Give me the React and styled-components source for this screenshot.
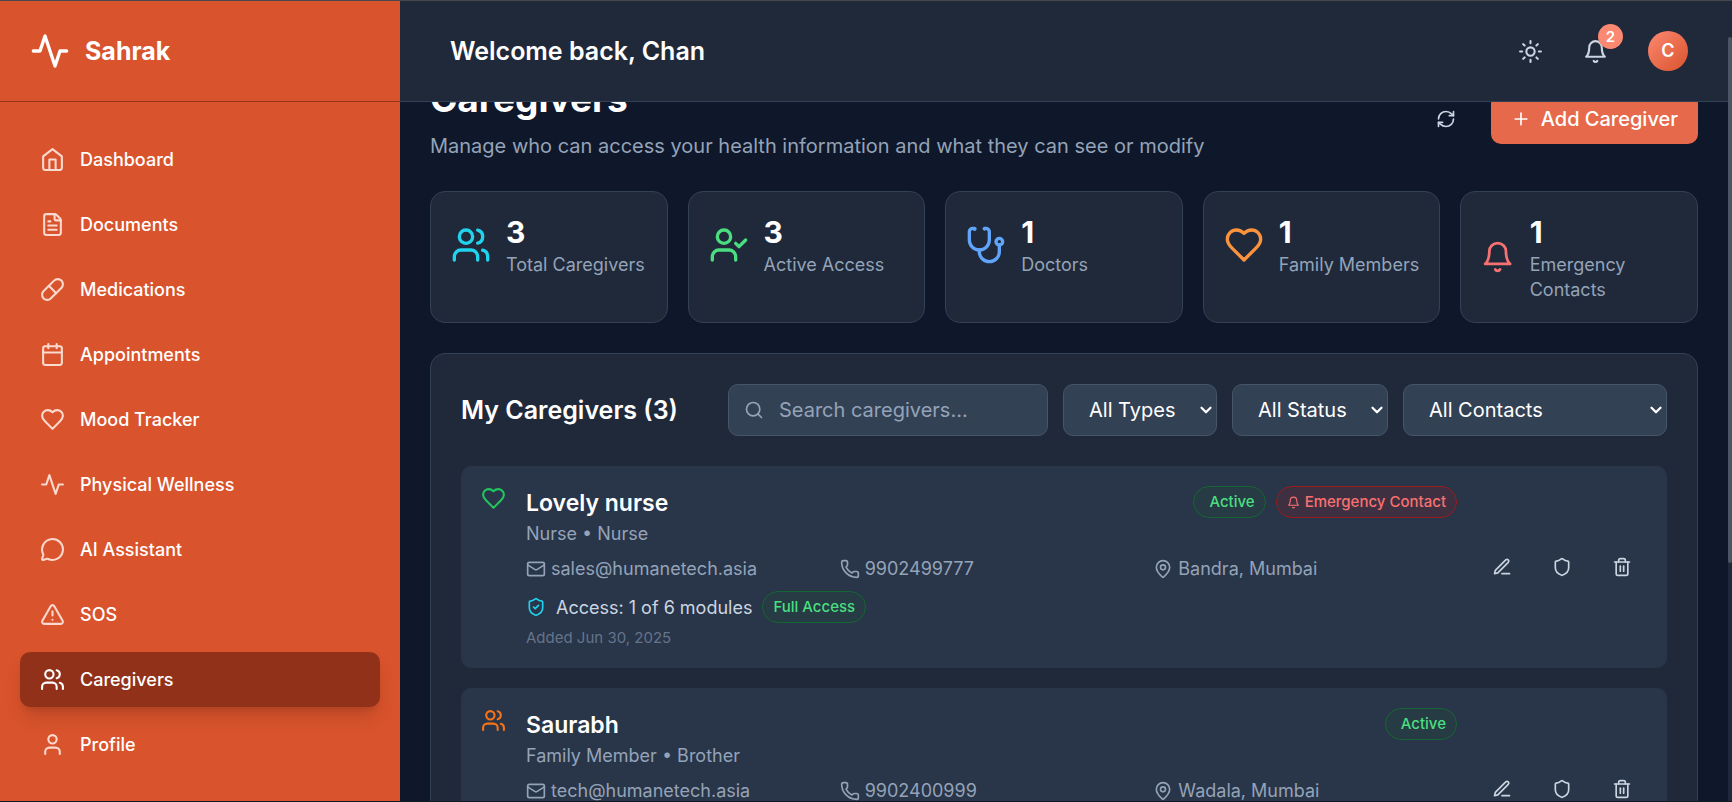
import { useLayoutEffect, useRef, useState } from "react";
import styled, { createGlobalStyle } from "styled-components";
import { Pill, Calendar, MessageCircle, TriangleAlert, User, Sun, RefreshCw, Plus, Search, Mail, Phone, MapPin, Trash2, FileText, Shield, ShieldCheck, ChevronDown } from "lucide-react";


const GlobalStyle = createGlobalStyle`
    * {
        box-sizing: border-box;
    }
    body {
        margin: 0;
        background: #0f172a;
        color: #ffffff;
        font-family: Inter, "Liberation Sans", sans-serif;
        font-size: 20px;
        line-height: 30px;
    }
    h1, h2, h3, p, ul {
        margin: 0;
        padding: 0;
    }
    button, input, select {
        font-family: inherit;
        font-size: inherit;
        line-height: inherit;
        color: inherit;
    }
    button {
        border: 0;
        background: none;
        padding: 0;
        cursor: pointer;
    }
    svg {
        display: block;
    }
`

const Shell = styled.div`
    display: flex;
    height: 100vh;
    overflow: hidden;
    border-top: 1px solid #45484a;
    border-bottom: 1px solid #0f1a26;
`

const Sidebar = styled.aside`
    width: 400px;
    flex-shrink: 0;
    background: #d9532c;
    overflow: hidden;
`

const Brand = styled.div`
    display: flex;
    align-items: center;
    gap: 15px;
    height: 101px;
    padding: 0 30px;
    border-bottom: 1px solid #96331b;
    font-size: 25px;
    font-weight: 700;
`

const NavList = styled.ul`
    display: flex;
    flex-direction: column;
    gap: 10px;
    padding: 30px 20px;
    list-style: none;
`

const NavLink = styled.a`
    display: flex;
    align-items: center;
    gap: 15px;
    padding: 15px 20px;
    border-radius: 10px;
    font-size: 18px;
    line-height: 25px;
    font-weight: 500;
    color: #ffffff;
    text-decoration: none;
    background: ${p => p.$active ? "#92311a" : "transparent"};
    box-shadow: ${p => p.$active ? "0 12px 19px -4px rgba(0, 0, 0, 0.15), 0 5px 8px -5px rgba(0, 0, 0, 0.15)" : "none"};
    svg {
        color: ${p => p.$active ? "#ffffff" : "#fbd9cf"};
    }
`

const Main = styled.div`
    display: flex;
    flex-direction: column;
    flex: 1;
    min-width: 0;
`

const TopBar = styled.header`
    display: flex;
    align-items: center;
    justify-content: space-between;
    flex-shrink: 0;
    height: 101px;
    padding: 0 40px 0 50px;
    background: #1f293a;
    border-bottom: 1px solid #334155;
`

const Welcome = styled.h2`
    font-size: 25px;
    line-height: 35px;
    font-weight: 600;
`

const TopActions = styled.div`
    display: flex;
    align-items: center;
    gap: 20px;
`

const TopButton = styled.button`
    position: relative;
    padding: 10px;
    color: #cbd5e1;
`

const Count = styled.span`
    position: absolute;
    top: -5px;
    right: -5px;
    width: 25px;
    height: 25px;
    border-radius: 50%;
    background: #fb8871;
    color: #ffffff;
    font-size: 15px;
    line-height: 25px;
    font-weight: 600;
`

const Avatar = styled.button`
    width: 40px;
    height: 40px;
    margin-left: 10px;
    border-radius: 50%;
    background: linear-gradient(135deg, #fb8871, #d9532c);
    font-size: 18px;
    font-weight: 600;
    color: #ffffff;
`

const Content = styled.main`
    flex: 1;
    min-height: 0;
    overflow-y: auto;
    scrollbar-width: none;
    padding: 30px;
`

const ScrollTrack = styled.div`
    width: 4px;
    flex-shrink: 0;
    padding-top: 36px;
    background: #1f293a;
`

const ScrollThumb = styled.div`
    height: 526px;
    border-radius: 4px;
    background: #4b5563;
`

const PageHead = styled.div`
    display: flex;
    align-items: center;
    justify-content: space-between;
    margin-bottom: 30px;
`

const PageTitle = styled.h1`
    margin-bottom: 10px;
    font-size: 37px;
    line-height: 45px;
    font-weight: 700;
`

const Muted = styled.p`
    color: #94a3b8;
`

const PageActions = styled.div`
    display: flex;
    gap: 10px;
`

const RefreshButton = styled.button`
    padding: 15px 25px;
    color: #cbd5e1;
`

const AddButton = styled.button`
    display: flex;
    align-items: center;
    gap: 10px;
    padding: 10px 20px;
    border-radius: 10px;
    background: #e6694b;
    font-weight: 500;
    color: #ffffff;
`

const Stats = styled.div`
    display: grid;
    grid-template-columns: repeat(5, 1fr);
    gap: 20px;
    margin-bottom: 30px;
`

const StatCard = styled.div`
    padding: 20px;
    border: 1px solid #334155;
    border-radius: 15px;
    background: #1f293a;
`

const StatRow = styled.div`
    display: flex;
    align-items: center;
    gap: 15px;
    color: ${p => p.$color};
`

const StatValue = styled.p`
    font-size: 30px;
    line-height: 40px;
    font-weight: 700;
    color: #ffffff;
`

const StatLabel = styled.p`
    font-size: 18px;
    line-height: 25px;
    color: #94a3b8;
`

const Panel = styled.section`
    padding: 30px;
    border: 1px solid #334155;
    border-radius: 15px;
    background: #1f293a;
`

const PanelHead = styled.div`
    display: flex;
    align-items: center;
    justify-content: space-between;
    margin-bottom: 30px;
`

const PanelTitle = styled.h2`
    font-size: 25px;
    line-height: 35px;
    font-weight: 600;
`

const Filters = styled.div`
    display: flex;
    gap: 15px;
`

const SearchBox = styled.label`
    display: flex;
    align-items: center;
    gap: 15px;
    width: 320px;
    height: 52px;
    padding: 0 15px;
    border: 1px solid #475569;
    border-radius: 10px;
    background: #334155;
    color: #94a3b8;
`

const SearchInput = styled.input`
    flex: 1;
    min-width: 0;
    border: 0;
    outline: 0;
    padding: 0;
    background: none;
    color: #ffffff;
    &::placeholder{
        color: #94a3b8;
    }
`

const SelectWrap = styled.div`
    position: relative;
    width: ${p => p.$width};
    > svg {
        position: absolute;
        top: 17px;
        right: 2px;
        pointer-events: none;
    }
`

const Select = styled.select`
    appearance: none;
    width: 100%;
    height: 52px;
    padding: 0 25px;
    border: 1px solid #475569;
    border-radius: 10px;
    background-color: #334155;
    color: #ffffff;
`

const CardList = styled.div`
    display: flex;
    flex-direction: column;
    gap: 20px;
`

const Card = styled.article`
    display: flex;
    align-items: flex-start;
    gap: 20px;
    padding: 20px;
    border-radius: 10px;
    background: #293548;
`

const TypeIcon = styled.div`
    color: ${p => p.$color};
`

const CardBody = styled.div`
    flex: 1;
    min-width: 0;
`

const CardTop = styled.div`
    display: flex;
    align-items: flex-start;
    justify-content: space-between;
    margin-bottom: 10px;
`

const Name = styled.h3`
    font-size: 23px;
    line-height: 35px;
    font-weight: 600;
`

const SmallText = styled.p`
    font-size: 18px;
    line-height: 25px;
    color: #94a3b8;
`

const Badges = styled.div`
    display: flex;
    gap: 10px;
`

const Badge = styled.span`
    display: inline-flex;
    align-items: center;
    gap: 5px;
    padding: 5px 10px;
    border: 1px solid ${p => p.$red ? "#991b1b" : "#166534"};
    border-radius: 16px;
    background: ${p => p.$red ? "#3e3040" : "#263b43"};
    color: ${p => p.$red ? "#f87171" : "#4ade80"};
    font-size: 15px;
    line-height: 20px;
    font-weight: 500;
`

const Contacts = styled.div`
    display: grid;
    grid-template-columns: repeat(3, 1fr);
    gap: 10px;
    margin-bottom: 10px;
`

const ContactItem = styled.div`
    display: flex;
    align-items: center;
    gap: 5px;
    font-size: 18px;
    line-height: 25px;
    color: #94a3b8;
`

const AccessRow = styled.div`
    display: flex;
    align-items: center;
    gap: 10px;
    margin-bottom: 5px;
    font-size: 18px;
    line-height: 25px;
    color: #cbd5e1;
    > svg {
        color: #22d3ee;
    }
`

const Added = styled.p`
    font-size: 15px;
    line-height: 20px;
    color: #64748b;
`

const CardActions = styled.div`
    display: flex;
    align-self: center;
    gap: 10px;
`

const IconButton = styled.button`
    padding: 15px;
    color: #cbd5e1;
`

// stroke icons drawn on the 24px grid
const Stroke = ({ size = 25, children }) => (
    <svg width={size} height={size} viewBox="0 0 24 24" fill="none" stroke="currentColor" strokeWidth="2" strokeLinecap="round" strokeLinejoin="round" aria-hidden="true">
        {children}
    </svg>
)

const Pulse = ({ size }) => <Stroke size={size}><path d="M22 12h-4l-3 9L9 3l-3 9H2" /></Stroke>

const Home = ({ size }) => (
    <Stroke size={size}>
        <path d="m3 9 9-7 9 7v11a2 2 0 0 1-2 2H5a2 2 0 0 1-2-2z" />
        <path d="M9 22V12h6v10" />
    </Stroke>
)

const Heart = ({ size }) => (
    <Stroke size={size}>
        <path d="M19 14c1.49-1.46 3-3.21 3-5.5A5.5 5.5 0 0 0 16.5 3c-1.76 0-3 .5-4.5 2-1.5-1.5-2.74-2-4.5-2A5.5 5.5 0 0 0 2 8.5c0 2.3 1.5 4.05 3 5.5l7 7Z" />
    </Stroke>
)

const Bell = ({ size }) => (
    <Stroke size={size}>
        <path d="M6 8a6 6 0 0 1 12 0c0 7 3 9 3 9H3s3-2 3-9" />
        <path d="M10.3 21a1.94 1.94 0 0 0 3.4 0" />
    </Stroke>
)

const Users = ({ size }) => (
    <Stroke size={size}>
        <path d="M16 21v-2a4 4 0 0 0-4-4H6a4 4 0 0 0-4 4v2" />
        <circle cx="9" cy="7" r="4" />
        <path d="M22 21v-2a4 4 0 0 0-3-3.87" />
        <path d="M16 3.13a4 4 0 0 1 0 7.75" />
    </Stroke>
)

const UserCheck = ({ size }) => (
    <Stroke size={size}>
        <path d="M16 21v-2a4 4 0 0 0-4-4H6a4 4 0 0 0-4 4v2" />
        <circle cx="9" cy="7" r="4" />
        <path d="m16 11 2 2 4-4" />
    </Stroke>
)

const Stethoscope = ({ size }) => (
    <Stroke size={size}>
        <path d="M4.8 2.3A.3.3 0 1 0 5 2H4a2 2 0 0 0-2 2v5a6 6 0 0 0 12 0V4a2 2 0 0 0-2-2h-1a.2.2 0 1 0 .3.3" />
        <path d="M8 15v1a6 6 0 0 0 12 0v-4" />
        <circle cx="20" cy="10" r="2" />
    </Stroke>
)

const Edit = ({ size }) => (
    <Stroke size={size}>
        <path d="M12 20h9" />
        <path d="M16.5 3.5a2.12 2.12 0 0 1 3 3L7 19l-4 1 1-4Z" />
    </Stroke>
)

const navItems = [
    { label: "Dashboard", icon: Home },
    { label: "Documents", icon: FileText },
    { label: "Medications", icon: Pill },
    { label: "Appointments", icon: Calendar },
    { label: "Mood Tracker", icon: Heart },
    { label: "Physical Wellness", icon: Pulse },
    { label: "AI Assistant", icon: MessageCircle },
    { label: "SOS", icon: TriangleAlert },
    { label: "Caregivers", icon: Users },
    { label: "Profile", icon: User },
]

const stats = [
    { label: "Total Caregivers", value: 3, color: "#22d3ee", icon: Users },
    { label: "Active Access", value: 3, color: "#4ade80", icon: UserCheck },
    { label: "Doctors", value: 1, color: "#60a5fa", icon: Stethoscope },
    { label: "Family Members", value: 1, color: "#fb923c", icon: Heart },
    { label: "Emergency Contacts", value: 1, color: "#f87171", icon: Bell },
]

const filters = [
    { label: "All Types", name: "Type", width: "154px" },
    { label: "All Status", name: "Status", width: "156px" },
    { label: "All Contacts", name: "Contacts", width: "264px" },
]

const caregivers = [
    { id: 1, name: "Lovely nurse", type: "Nurse • Nurse", email: "sales@humanetech.asia", phone: "9902499777", place: "Bandra, Mumbai", emergency: true, color: "#22c55e", icon: Heart },
    { id: 2, name: "Saurabh", type: "Family Member • Brother", email: "tech@humanetech.asia", phone: "9902400999", place: "Wadala, Mumbai", emergency: false, color: "#f97316", icon: Users },
]

function CaregiverCard({ item }) {
    const Icon = item.icon
    return (
        <Card>
            <TypeIcon $color={item.color}><Icon size={25} /></TypeIcon>
            <CardBody>
                <CardTop>
                    <div>
                        <Name>{item.name}</Name>
                        <SmallText>{item.type}</SmallText>
                    </div>
                    <Badges>
                        <Badge><span />Active</Badge>
                        {item.emergency && <Badge $red><Bell size={13} />Emergency Contact</Badge>}
                    </Badges>
                </CardTop>
                <Contacts>
                    <ContactItem><Mail size={20} />{item.email}</ContactItem>
                    <ContactItem><Phone size={20} />{item.phone}</ContactItem>
                    <ContactItem><MapPin size={20} />{item.place}</ContactItem>
                </Contacts>
                <AccessRow>
                    <ShieldCheck size={20} />
                    <span>Access: 1 of 6 modules</span>
                    <Badge>Full Access</Badge>
                </AccessRow>
                <Added>Added Jun 30, 2025</Added>
            </CardBody>
            <CardActions>
                <IconButton aria-label="Edit"><Edit size={20} /></IconButton>
                <IconButton aria-label="Permissions"><Shield size={20} /></IconButton>
                <IconButton aria-label="Delete"><Trash2 size={20} /></IconButton>
            </CardActions>
        </Card>
    )
}

export default function App() {
    const [search, setSearch] = useState("");
    const [active, setActive] = useState("Caregivers");
    const contentRef = useRef(null);

    useLayoutEffect(() => {
        contentRef.current.scrollTop = 56
    }, [])

    let list = caregivers.filter(e => e.name.toLowerCase().includes(search.toLowerCase()))

    return (
        <Shell>
            <GlobalStyle />
            <Sidebar>
                <Brand><Pulse size={40} />Sahrak</Brand>
                <nav>
                    <NavList>
                        {navItems.map(({ label, icon: Icon }) => (
                            <li key={label}>
                                <NavLink href="#" $active={active === label} onClick={(e) => { e.preventDefault(); setActive(label); }}>
                                    <Icon size={25} />{label}
                                </NavLink>
                            </li>
                        ))}
                    </NavList>
                </nav>
            </Sidebar>

            <Main>
                <TopBar>
                    <Welcome>Welcome back, Chan</Welcome>
                    <TopActions>
                        <TopButton aria-label="Toggle theme"><Sun size={25} /></TopButton>
                        <TopButton aria-label="Notifications"><Bell size={25} /><Count>2</Count></TopButton>
                        <Avatar>C</Avatar>
                    </TopActions>
                </TopBar>

                <Content ref={contentRef}>
                    <PageHead>
                        <div>
                            <PageTitle>Caregivers</PageTitle>
                            <Muted>Manage who can access your health information and what they can see or modify</Muted>
                        </div>
                        <PageActions>
                            <RefreshButton aria-label="Refresh"><RefreshCw size={20} /></RefreshButton>
                            <AddButton><Plus size={20} />Add Caregiver</AddButton>
                        </PageActions>
                    </PageHead>

                    <Stats>
                        {stats.map(({ label, value, color, icon: Icon }) => (
                            <StatCard key={label}>
                                <StatRow $color={color}>
                                    <Icon size={40} />
                                    <div>
                                        <StatValue>{value}</StatValue>
                                        <StatLabel>{label}</StatLabel>
                                    </div>
                                </StatRow>
                            </StatCard>
                        ))}
                    </Stats>

                    <Panel>
                        <PanelHead>
                            <PanelTitle>My Caregivers (3)</PanelTitle>
                            <Filters>
                                <SearchBox>
                                    <Search size={20} />
                                    <SearchInput aria-label="Search caregivers" placeholder="Search caregivers..." value={search} onChange={(e) => setSearch(e.target.value)} />
                                </SearchBox>
                                {filters.map((one) => (
                                    <SelectWrap $width={one.width} key={one.name}>
                                        <Select aria-label={one.name}><option>{one.label}</option></Select>
                                        <ChevronDown size={18} strokeWidth={3} />
                                    </SelectWrap>
                                ))}
                            </Filters>
                        </PanelHead>
                        <CardList>
                            {list.map((one) => <CaregiverCard item={one} key={one.id} />)}
                        </CardList>
                    </Panel>
                </Content>
            </Main>
            <ScrollTrack><ScrollThumb /></ScrollTrack>
        </Shell>
    );
}
